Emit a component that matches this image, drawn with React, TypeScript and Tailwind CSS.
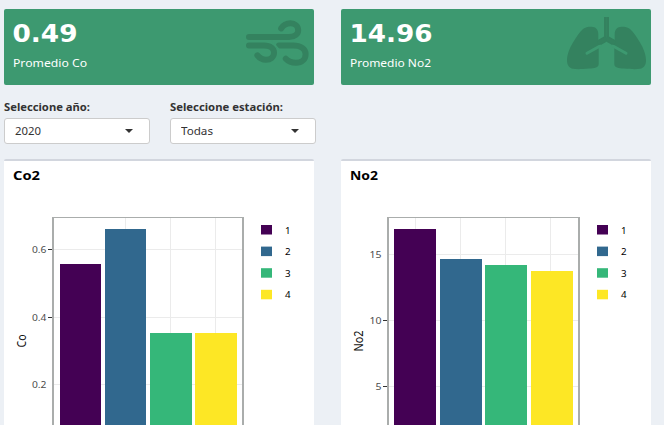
import React from "react";

const COLORS = ["#440154", "#31688e", "#35b779", "#fde725"];

type Chart = {
  x: number;
  top: number;
  right: number;
  ticks: { y: number; label: string; mark: boolean }[];
  bars: { x: number; y: number; w: number; grid: boolean }[];
  title: string;
  titleX: number;
  titleW: number;
  labelW: number;
};

function T({ x, y, s, w, f = "#222", bold = false, font = "Noto Sans", children }: { x: number; y: number; s: number; w: number; f?: string; bold?: boolean; font?: string; children: string }) {
  return (
    <text x={x} y={y} fontSize={s} textLength={w} lengthAdjust="spacingAndGlyphs" fill={f} fontWeight={bold ? 700 : 400} fontFamily={`"${font}", sans-serif`}>
      {children}
    </text>
  );
}

function WindIcon() {
  return (
    <svg width="63" height="46" viewBox="0 0 63 46" className="absolute left-[242px] top-[11px] text-[#34825f]" fill="none" stroke="currentColor" strokeWidth="6" strokeLinejoin="round" strokeLinecap="round">
      <path d="M3 17H43C49 17 52.2 13.8 52.2 10.2C52.2 6 48.8 3.2 44.5 3.2C40.5 3.2 37.5 4.6 35.2 8.4" />
      <path d="M3 25.6H18C24.5 25.6 28 28.8 28 32.8C28 37 24.5 39.7 20 39.7C15.8 39.7 13.4 38 11.4 35.4" />
      <path d="M33 25.6H47C55 25.6 59.6 29.2 59.6 34.2C59.6 39.2 55.8 42.8 50 42.8C45.4 42.8 42 41.2 39.8 38.8" />
      <path d="M26 21.5L33 29.5" stroke="#3d9970" strokeWidth="1.4" />
    </svg>
  );
}

function LungsIcon() {
  const half = "M37 0H39.6V24.7L31.7 29.2V47C31.7 50.6 27.5 51.2 22 51.6C15 52.2 10 52.6 6 51.8C2 51 0 47.6 0 43.4C0 38 2.5 31 6 25.5C10 19.5 12 15.5 16 12C18 10.2 21 9.7 24.5 9.7C28.5 9.7 31.3 12.5 31.3 17V22.8L37 19.5Z";
  const slit = "M33 29L20 36.2";
  return (
    <svg width="79" height="53" viewBox="0 0 79 53" className="absolute left-[226px] top-[8px]">
      {["", "translate(79 0) scale(-1 1)"].map((transform) => (
        <g key={transform} transform={transform || undefined}>
          <path d={half} fill="#34825f" />
          <path d={slit} stroke="#3d9970" strokeWidth="3" strokeLinecap="round" />
          <path d="M39.5 21.5L31 26.3" stroke="#34825f" strokeWidth="4" />
        </g>
      ))}
    </svg>
  );
}

function Plot({ c }: { c: Chart }) {
  return (
    <svg width="310" height="236" viewBox="0 0 310 236" className="block shrink-0">
      {c.ticks.map((t) => (
        <g key={t.label}>
          <line x1={c.x} x2={c.right} y1={t.y + 0.5} y2={t.y + 0.5} stroke="#ebebeb" />
          {t.mark && <line x1={c.x - 4} x2={c.x} y1={t.y + 0.5} y2={t.y + 0.5} stroke="#333" />}
        </g>
      ))}
      {c.bars.map((b, i) => (
        <g key={i}>
          {b.grid && <line x1={c.x + 28.5 + i * 45} x2={c.x + 28.5 + i * 45} y1={c.top} y2="236" stroke="#ebebeb" />}
          <rect x={b.x} y={b.y} width={b.w} height={236 - b.y} fill={COLORS[i]} />
        </g>
      ))}
      <path d={`M${c.x + 1} 236V${c.top + 0.5}H${c.right - 1}V236`} fill="none" stroke="#aaadac" strokeWidth="1" />
      <path d={`M${c.x + 1} 236V${c.top}M${c.right - 1} 236V${c.top}`} stroke="#aaadac" strokeWidth="2" />
      {c.ticks.map((t) => (
        <T key={t.label} x={c.x - 5.5 - c.labelW * (t.label.length === 1 ? 0.5 : 1)} y={t.y + 4} s={9.5} w={c.labelW * (t.label.length === 1 ? 0.5 : 1)} f="#4d4d4d">
          {t.label}
        </T>
      ))}
      <text transform={`translate(${c.titleX} 152) rotate(-90)`} y="4" fontSize="12.5" textLength={c.titleW} lengthAdjust="spacingAndGlyphs" fill="#111" textAnchor="middle" fontFamily='"Noto Sans", sans-serif'>
        {c.title}
      </text>
      {COLORS.map((color, i) => (
        <g key={color}>
          <rect x={c.right + 17} y={36 + i * 21.6} width="11" height="9.5" fill={color} />
          <T x={c.right + 41} y={44.5 + i * 21.6} s={9} w={5.6} f="#000">{String(i + 1)}</T>
        </g>
      ))}
    </svg>
  );
}

function ValueBox({ value, label, vw, lw, children }: { value: string; label: string; vw: number; lw: number; children: React.ReactNode }) {
  return (
    <div className="relative h-[76px] w-[310px] rounded-[2px] bg-[#3d9970]">
      <svg width="200" height="76" className="block">
        <T x={8.5} y={32.5} s={24.5} w={vw} f="#fff" bold font="DejaVu Sans">{value}</T>
        <T x={9} y={57.5} s={11.5} w={lw} f="#fff">{label}</T>
      </svg>
      {children}
    </div>
  );
}

function Select({ label, lw, value, vw }: { label: string; lw: number; value: string; vw: number }) {
  return (
    <div className="w-[146px]">
      <svg width="146" height="18" className="block overflow-visible">
        <T x={0} y={11} s={10} w={lw} f="#333" bold>{label}</T>
      </svg>
      <div className="flex h-[26px] items-center justify-between rounded-[3px] border border-[#ccc] bg-white pl-[10px] pr-[16px]">
        <svg width="60" height="24"><T x={0} y={16} s={10.5} w={vw} f="#333">{value}</T></svg>
        <span className="border-x-[4.5px] border-t-[4px] border-x-transparent border-t-[#333]" />
      </div>
    </div>
  );
}

function Panel({ title, tw, chart }: { title: string; tw: number; chart: Chart }) {
  return (
    <section className="h-[266px] w-[310px] overflow-hidden rounded-t-[2px] border-t-2 border-[#d2d6de] bg-white">
      <svg width="310" height="28" className="block">
        <T x={9} y={19} s={12} w={tw} f="#000" bold>{title}</T>
      </svg>
      <Plot c={chart} />
    </section>
  );
}

const co: Chart = {
  x: 48, top: 28, right: 240, title: "Co", titleX: 18, titleW: 13, labelW: 14.5,
  ticks: [{ y: 60, label: "0.6", mark: true }, { y: 128, label: "0.4", mark: true }, { y: 195, label: "0.2", mark: false }],
  bars: [{ x: 56, y: 75, w: 41, grid: false }, { x: 101, y: 40, w: 41, grid: true }, { x: 146, y: 144, w: 42, grid: true }, { x: 191, y: 144, w: 42, grid: true }],
};
const no: Chart = {
  x: 46, top: 28, right: 239, title: "No2", titleX: 18, titleW: 21, labelW: 12,
  ticks: [{ y: 65, label: "15", mark: false }, { y: 131, label: "10", mark: true }, { y: 197, label: "5", mark: true }],
  bars: [{ x: 53, y: 40, w: 42, grid: true }, { x: 99, y: 70, w: 42, grid: true }, { x: 144, y: 76, w: 42, grid: true }, { x: 190, y: 82, w: 42, grid: true }],
};

export default function App() {
  return (
    <div className="h-[427px] w-[664px] overflow-hidden bg-white">
      <main className="flex h-[425px] flex-col overflow-hidden bg-[#ecf0f5] pl-1 pt-[9px]">
        <div className="flex gap-[27px]">
          <ValueBox value="0.49" label="Promedio Co" vw={65} lw={74}>
            <WindIcon />
          </ValueBox>
          <ValueBox value="14.96" label="Promedio No2" vw={83} lw={81}>
            <LungsIcon />
          </ValueBox>
        </div>
        <div className="mt-[15px] flex h-[59px] gap-5">
          <Select label="Seleccione año:" lw={86} value="2020" vw={26} />
          <Select label="Seleccione estación:" lw={113} value="Todas" vw={32} />
        </div>
        <div className="flex gap-[27px]">
          <Panel title="Co2" tw={27} chart={co} />
          <Panel title="No2" tw={28} chart={no} />
        </div>
      </main>
    </div>
  );
}
